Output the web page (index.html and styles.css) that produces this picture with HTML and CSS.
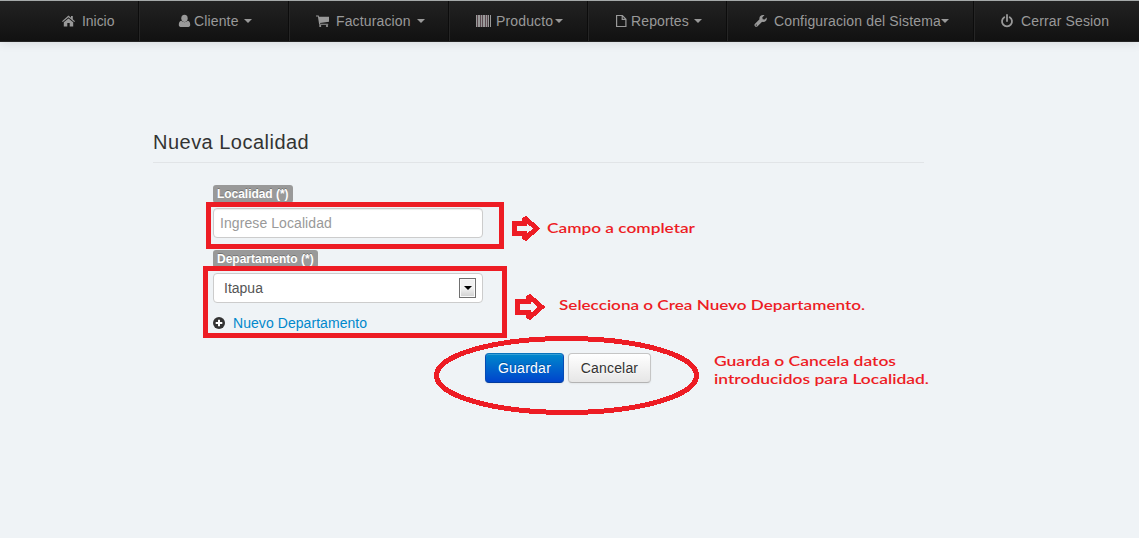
FILE: index.html
```html
<!DOCTYPE html>
<html lang="es">
<head>
<meta charset="utf-8">
<title>Nueva Localidad</title>
<link rel="stylesheet" href="styles.css">
</head>
<body>
<nav class="navbar">
  <a class="item first"><svg class="icon" viewBox="0 0 13 14"><path d="M6.500 1.500L9 3.700V2h1.800v3.300L13 7.200l-.8.900L6.500 3.300.8 8.100 0 7.200z"/><path d="M6.500 4.400L11.200 8.300V12.500H7.700V9H5.300v3.500H1.800V8.300z"/></svg><span class="label tight">Inicio</span></a>
  <a class="item user"><svg class="icon" viewBox="0 0 13 14"><ellipse cx="5.500" cy="4.300" rx="3.200" ry="3.600"/><path d="M2.300 6.800c1.700 1.900 4.700 1.900 6.400 0C10.700 7.200 11.200 9 11.200 11c0 1-.7 1.900-1.700 1.900h-8C.5 12.900-.2 12-.2 11c0-2 .5-3.800 2.500-4.200z"/></svg><span class="label">Cliente</span><i class="caret spaced"></i></a>
  <a class="item"><svg class="icon" viewBox="0 0 13 14"><path d="M0 1.500h2.700l.3 1.200h10v5l-9 1.200.2.800h8v1H3.200L1.900 2.600H0z"/><circle cx="4.200" cy="12" r="1.100"/><circle cx="11" cy="12" r="1.100"/></svg><span class="label">Facturacion</span><i class="caret spaced wide"></i></a>
  <a class="item"><svg class="icon barcode" viewBox="0 0 15 14"><path d="M0 1h1v12H0zM2 1h2v12H2zM5 1h1v12H5zM7 1h2v12H7zM10 1h1v12h-1zM12 1h1v12h-1zM14 1h1v12h-1z"/><path class="tint" d="M1 1h1v12H1zM4 1h1v12H4zM6 1h1v12H6zM9 1h1v12H9zM11 1h1v12h-1z"/></svg><span class="label">Producto</span><i class="caret near"></i></a>
  <a class="item file"><svg class="icon" viewBox="0 0 13 14"><path class="line" d="M.6 1.500h5.800l3.500 3.700v7.300H.6zM6.200 1.500v3.900h3.700"/></svg><span class="label">Reportes</span><i class="caret spaced"></i></a>
  <a class="item"><svg class="icon" viewBox="0 0 13 14"><path d="M12.700 3.500c.7 2.900-1.800 5.100-4.600 4.300l-4.500 4.500c-1.700 1.700-4.300-.8-2.600-2.500l4.500-4.500C4.800 2.500 7.500.2 10.500 1.200L8.300 3.300l.4 1.900 1.900.4zM2.300 10.400a.65.65 0 1 0 .01 1.300.65.65 0 0 0-.01-1.300z"/></svg><span class="label">Configuracion del Sistema</span><i class="caret"></i></a>
  <a class="item"><svg class="icon" viewBox="0 0 13 14"><path class="line power" d="M3.300 3.200a5 5 0 1 0 5.400 0M6 1v6"/></svg><span class="label">Cerrar Sesion</span></a>
</nav>
<main class="content">
  <h1 class="title">Nueva Localidad</h1>
  <form class="form">
    <label class="tag">Localidad (*)</label>
    <div class="field"><span class="placeholder">Ingrese Localidad</span></div>
    <label class="tag second">Departamento (*)</label>
    <div class="field select"><span>Itapua</span><b class="drop"><i class="drop-arrow"></i></b></div>
    <a class="add"><svg class="plus" viewBox="0 0 12 12"><circle cx="6" cy="6" r="6"/><path d="M6 2.700v6.600M2.700 6h6.600"/></svg><span>Nuevo Departamento</span></a>
    <div class="actions"><button type="button" class="btn primary">Guardar</button><button type="button" class="btn">Cancelar</button></div>
  </form>
</main>
<svg class="notes" viewBox="0 0 1139 538">
  <g class="stroke">
    <path d="M208.500 204.500h293v42h-293z"/>
    <path d="M205.500 268.500h299v67h-299z"/>
    <ellipse cx="566.500" cy="375.500" rx="130" ry="37"/>
  </g>
  <g class="arrow">
    <path d="M514.500 223.500h9.500v-3.500l2-1 10.500 9.500-10.500 9.500-2-1v-4h-9.500z"/>
    <path d="M517.500 301.500H528v-3.500l2-1 11.500 10-11.500 10-2-1v-4h-10.500z"/>
  </g>
  <g class="text">
    <text x="547" y="233" textLength="148" lengthAdjust="spacingAndGlyphs">Campo a completar</text>
    <text x="559" y="310" textLength="306" lengthAdjust="spacingAndGlyphs">Selecciona o Crea Nuevo Departamento.</text>
    <text x="714" y="366" textLength="182" lengthAdjust="spacingAndGlyphs">Guarda o Cancela datos</text>
    <text x="714" y="384" textLength="215" lengthAdjust="spacingAndGlyphs">introducidos para Localidad.</text>
  </g>
</svg>
</body>
</html>
```
FILE: styles.css
```css
* { box-sizing: border-box; }
body {
  margin: 0;
  height: 538px;
  overflow: hidden;
  background: #eff3f6;
  color: #333;
  font: 14px/20px "Liberation Sans", Arial, sans-serif;
}
.navbar {
  display: grid;
  grid-template-columns: 139px 150px 160px 139px 139px 247px 165px;
  height: 42px;
  border-top: 1px solid #a5a9a9;
  border-bottom: 1px solid #252525;
  background: linear-gradient(#222, #111);
  box-shadow: 0 1px 10px rgba(0, 0, 0, .1);
}
.item {
  display: flex;
  align-items: center;
  padding-left: 26px;
  border-left: 1px solid #252525;
  border-right: 1px solid #0c0c0c;
  color: #999;
  white-space: nowrap;
}
.item.first { padding-left: 62px; border-left: 0; }
.item:last-child { border-right: 0; }
.item.user { padding-left: 39px; }
.item.file { padding-left: 27px; }
.label { letter-spacing: .14px; }
.label.tight { letter-spacing: -.05px; }
.icon { width: 13px; height: 14px; margin-right: 7px; fill: #999; flex: none; overflow: visible; }
.user .icon, .file .icon { margin-right: 2px; }
.icon.barcode { width: 15px; margin-right: 5px; }
.tint { fill: #5b4a50; }
.line { fill: none; stroke: #999; stroke-width: 1.2; }
.power { stroke-width: 1.8; stroke-linecap: round; }
.caret {
  border: 4px solid transparent;
  border-top-color: #999;
  border-bottom: 0;
}
.caret.spaced { margin-left: 5px; }
.caret.wide { margin-left: 6px; }
.caret.near { margin-left: 2px; }
.content { width: 771px; margin: 80px 0 0 153px; }
.title {
  height: 41px;
  margin: 0;
  padding-top: 10px;
  border-bottom: 1px solid #e1e4e7;
  font-size: 20px;
  line-height: 20px;
  font-weight: 400;
  letter-spacing: .48px;
}
.form { display: flex; flex-direction: column; align-items: flex-start; padding: 22px 0 0 60px; }
.tag {
  height: 18px;
  padding: 2px 4px;
  border-radius: 3px;
  background: #999;
  color: #fff;
  font-size: 12px;
  line-height: 14px;
  font-weight: 700;
  letter-spacing: -.04px;
  text-shadow: 0 -1px 0 rgba(0, 0, 0, .25);
}
.tag.second { margin-top: 12px; letter-spacing: 0; }
.field {
  width: 270px;
  height: 30px;
  margin-top: 5px;
  padding: 4px 6px;
  border: 1px solid #ccc;
  border-radius: 4px;
  background: #fff;
  color: #555;
  box-shadow: inset 0 1px 1px rgba(0, 0, 0, .075);
}
.placeholder { color: #999; letter-spacing: .08px; }
.select { display: flex; justify-content: space-between; padding-left: 10px; box-shadow: none; }
.drop {
  display: flex;
  align-items: center;
  justify-content: center;
  width: 17px;
  height: 20px;
  border: 1px solid #707070;
  background: linear-gradient(#f2f2f2 50%, #d0d0d0);
  box-shadow: inset 0 0 0 1px #fafafa;
}
.drop-arrow { border: 4px solid transparent; border-top-color: #000; border-bottom: 0; }
.add { display: flex; align-items: center; gap: 8px; margin-top: 10px; color: #08c; letter-spacing: .06px; }
.plus { width: 12px; height: 12px; fill: #333; stroke: #fff; stroke-width: 0; }
.plus path { stroke-width: 2; }
.actions { display: flex; gap: 4px; margin: 20px 0 0 272px; }
.btn {
  width: 83px;
  height: 30px;
  padding: 4px 0;
  border: 1px solid #c5c5c5;
  border-bottom-color: #b3b3b3;
  border-radius: 4px;
  background: linear-gradient(#fff, #e6e6e6);
  color: #333;
  font: 14px/20px "Liberation Sans", Arial, sans-serif;
  letter-spacing: .16px;
  text-shadow: 0 1px 1px rgba(255, 255, 255, .75);
  box-shadow: inset 0 1px 0 rgba(255, 255, 255, .2), 0 1px 2px rgba(0, 0, 0, .05);
}
.primary {
  width: 79px;
  border-color: #0874bd #064bb4 #023b9d;
  background: linear-gradient(#08c, #04c);
  color: #fff;
  letter-spacing: .25px;
  text-shadow: 0 -1px 0 rgba(0, 0, 0, .25);
}
.notes { position: absolute; left: 0; top: 0; width: 1139px; height: 538px; pointer-events: none; }
.stroke { fill: none; stroke: #ed1c24; stroke-width: 5; shape-rendering: crispEdges; }
.arrow { fill: #eff3f6; stroke: #ed1c24; stroke-width: 5; shape-rendering: crispEdges; }
.text { fill: #ed1c24; font: 600 14px Lato, "Open Sans", sans-serif; }
```
